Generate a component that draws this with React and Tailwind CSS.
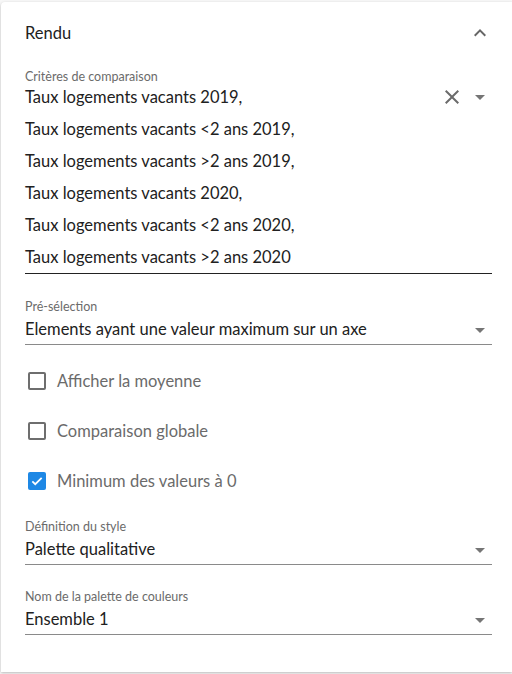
import React from "react";

const font = { fontFamily: "Lato, 'Noto Sans', sans-serif" };

const Arrow = () => (
  <svg width="24" height="24" viewBox="0 0 24 24" className="fill-[#757575]">
    <path d="M7 10l5 5 5-5z" />
  </svg>
);

const SelectField = ({ label, value }) => (
  <div className="flex flex-col">
    <span className="text-[12.5px] leading-[14px] text-[#6b6b6b]">{label}</span>
    <div className="flex items-center justify-between border-b border-[#8a8a8a] h-[31px] pt-[1px]">
      <span className="text-[16.5px] text-[#212121]">{value}</span>
      <Arrow />
    </div>
  </div>
);

const CheckRow = ({ label, checked }) => (
  <div className="flex items-center gap-[11px] h-[50px] pl-[3px]">
    {checked ? (
      <span className="w-[18px] h-[18px] rounded-[2px] bg-[#1e88e5] flex items-center justify-center">
        <svg width="14" height="14" viewBox="0 0 24 24" fill="none" stroke="white" strokeWidth="3">
          <path d="M4 12.5l5 5L20 6.5" />
        </svg>
      </span>
    ) : (
      <span className="w-[18px] h-[18px] rounded-[2px] border-2 border-[#6e6e6e]" />
    )}
    <span className="text-[16.5px] text-[#6b6b6b]">{label}</span>
  </div>
);

export default function App() {
  const criteres = [
    "Taux logements vacants 2019,",
    "Taux logements vacants <2 ans 2019,",
    "Taux logements vacants >2 ans 2019,",
    "Taux logements vacants 2020,",
    "Taux logements vacants <2 ans 2020,",
    "Taux logements vacants >2 ans 2020",
  ];

  return (
    <div className="bg-[#f7f7f7] w-[512px] h-[674px] pt-[2px] pl-[1px] overflow-hidden" style={font}>
      <div className="bg-white h-[670px] rounded-tl-[4px] shadow-[0_1px_3px_rgba(0,0,0,0.25)] pl-[24px] pr-[20px]">
        <div className="flex items-center justify-between h-[62px]">
          <span className="text-[16.5px] text-[#212121]">Rendu</span>
          <svg width="24" height="24" viewBox="0 0 24 24" className="fill-[#666]">
            <path d="M7.41 15.41L12 10.83l4.59 4.58L18 14l-6-6-6 6z" />
          </svg>
        </div>

        <div className="flex flex-col mt-[6px]">
          <span className="text-[12.5px] leading-[14px] text-[#6b6b6b]">Critères de comparaison</span>
          <div className="border-b border-[#222] mt-[-3px]">
            {criteres.map((c, i) => (
              <div key={i} className="flex items-center justify-between h-[32px]">
                <span className="text-[16.5px] text-[#212121]">{c}</span>
                {i === 0 && (
                  <span className="flex items-center gap-[4px]">
                    <svg width="24" height="24" viewBox="0 0 24 24" className="fill-[#6b6b6b]">
                      <path d="M19 6.41L17.59 5 12 10.59 6.41 5 5 6.41 10.59 12 5 17.59 6.41 19 12 13.41 17.59 19 19 17.59 13.41 12z" />
                    </svg>
                    <Arrow />
                  </span>
                )}
              </div>
            ))}
          </div>
        </div>

        <div className="mt-[26px]">
          <SelectField label="Pré-sélection" value="Elements ayant une valeur maximum sur un axe" />
        </div>

        <div className="mt-[11px]">
          <CheckRow label="Afficher la moyenne" />
          <CheckRow label="Comparaison globale" />
          <CheckRow label="Minimum des valeurs à 0" checked />
        </div>

        <div className="mt-[14px]">
          <SelectField label="Définition du style" value="Palette qualitative" />
        </div>
        <div className="mt-[25px]">
          <SelectField label="Nom de la palette de couleurs" value="Ensemble 1" />
        </div>
      </div>
    </div>
  );
}
